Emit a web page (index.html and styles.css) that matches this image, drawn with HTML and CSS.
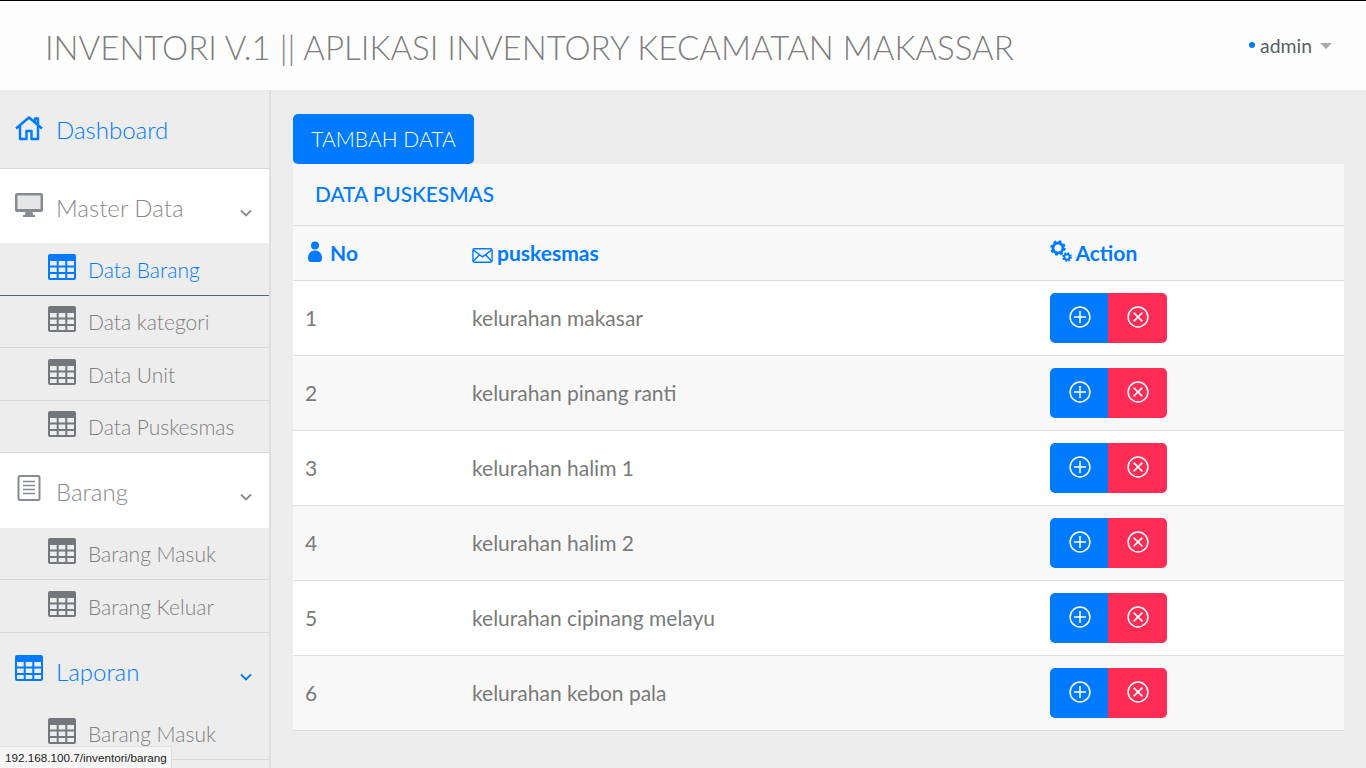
FILE: index.html
```html
<!DOCTYPE html>
<html>
<head>
    <title>Inventori</title>
    <meta charset="UTF-8">
    <meta name="viewport" content="width=device-width, initial-scale=1.0">
    <link rel="stylesheet" href="styles.css">
</head>
<body>
    <svg class="icon-defs" width="0" height="0">
        <defs>
            <symbol id="i-table" viewBox="0 0 28 26">
                <path fill-rule="evenodd" d="M2 0h24a2 2 0 0 1 2 2v22a2 2 0 0 1-2 2H2a2 2 0 0 1-2-2V2a2 2 0 0 1 2-2zM2 7v4.500h6.700V7zm8.700 0v4.500h6.600V7zm8.600 0v4.500H26V7zM2 13.500V18h6.700v-4.500zm8.700 0V18h6.600v-4.500zm8.600 0V18H26v-4.500zM2 20v4h6.700v-4zm8.700 0v4h6.600v-4zm8.600 0v4H26v-4z"/>
            </symbol>
            <symbol id="i-chevron" viewBox="0 0 12 8">
                <path d="M1 1.500l5 5 5-5" fill="none" stroke="currentColor" stroke-width="1.800"/>
            </symbol>
        </defs>
    </svg>

    <header class="topbar">
        <div class="brand">INVENTORI V.1 || APLIKASI INVENTORY KECAMATAN MAKASSAR</div>
        <div class="user-menu">
            <span class="user-dot"></span>
            <span class="user-name">admin</span>
            <span class="user-caret"></span>
        </div>
    </header>

    <div class="layout">
        <aside class="sidebar">
            <a class="nav-item nav-home is-blue">
                <svg class="nav-icon" viewBox="0 0 28 24" fill="none" stroke="currentColor" stroke-width="2.400" stroke-linejoin="round"><path d="M1 12.500L14 1.500l13 11M5 10v13h6.500v-8h5v8H23V10M20 6V2.500h3V9"/></svg>
                <span>Dashboard</span>
            </a>
            <a class="nav-item nav-master is-white">
                <svg class="nav-icon" viewBox="0 0 28 24" fill="currentColor"><rect x="2" y="2" width="24" height="15" fill="#e6e6e6"/><path fill-rule="evenodd" d="M2 0h24a2 2 0 0 1 2 2v15a2 2 0 0 1-2 2H2a2 2 0 0 1-2-2V2a2 2 0 0 1 2-2zm.5 2.500V16h23V2.500zM10.500 19h7l.5 3h2v2H8v-2h2z"/></svg>
                <span>Master Data</span>
                <svg class="nav-chevron"><use href="#i-chevron"/></svg>
            </a>
            <a class="sub-item is-tall is-current">
                <svg class="sub-icon"><use href="#i-table"/></svg>
                <span>Data Barang</span>
            </a>
            <a class="sub-item">
                <svg class="sub-icon"><use href="#i-table"/></svg>
                <span>Data kategori</span>
            </a>
            <a class="sub-item is-tall">
                <svg class="sub-icon"><use href="#i-table"/></svg>
                <span>Data Unit</span>
            </a>
            <a class="sub-item">
                <svg class="sub-icon"><use href="#i-table"/></svg>
                <span>Data Puskesmas</span>
            </a>
            <a class="nav-item is-white">
                <svg class="nav-icon" viewBox="0 0 28 26" fill="none" stroke="currentColor" stroke-width="2"><rect x="3.500" y="1" width="21" height="24" rx="1.500"/><path d="M8 6.500h12M8 10.500h12M8 14.500h12M8 18.500h12" stroke-width="1.600"/></svg>
                <span>Barang</span>
                <svg class="nav-chevron"><use href="#i-chevron"/></svg>
            </a>
            <a class="sub-item">
                <svg class="sub-icon"><use href="#i-table"/></svg>
                <span>Barang Masuk</span>
            </a>
            <a class="sub-item is-tall">
                <svg class="sub-icon"><use href="#i-table"/></svg>
                <span>Barang Keluar</span>
            </a>
            <a class="nav-item is-blue no-line">
                <svg class="nav-icon" fill="currentColor"><use href="#i-table"/></svg>
                <span>Laporan</span>
                <svg class="nav-chevron"><use href="#i-chevron"/></svg>
            </a>
            <a class="sub-item">
                <svg class="sub-icon"><use href="#i-table"/></svg>
                <span>Barang Masuk</span>
            </a>
        </aside>

        <main class="content">
            <button class="add-btn">TAMBAH DATA</button>
            <section class="card">
                <div class="card-title">DATA PUSKESMAS</div>
                <table class="data-table">
                    <thead>
                        <tr>
                            <th class="col-no">
                                <svg class="th-icon th-user" viewBox="0 0 14 22" fill="currentColor"><circle cx="7" cy="4.500" r="4"/><path d="M7 9.500c4 0 7 3 7 7.500 0 3-1.500 4-3 4H3c-1.500 0-3-1-3-4 0-4.500 3-7.500 7-7.500z"/></svg>
                                No
                            </th>
                            <th class="col-name">
                                <svg class="th-icon th-mail" viewBox="0 0 22 16" fill="none" stroke="currentColor" stroke-width="1.500"><rect x=".8" y=".8" width="20.400" height="14.400" rx="1.500"/><path d="M1 2l10 7.500L21 2M1 14.500l7-7.500M21 14.500l-7-7.500"/></svg>
                                puskesmas
                            </th>
                            <th>
                                <svg class="th-icon th-cogs" viewBox="0 0 22 22"><circle cx="8" cy="8" r="5" fill="none" stroke="currentColor" stroke-width="3"/><circle cx="8" cy="8" r="6.500" fill="none" stroke="currentColor" stroke-width="2.500" stroke-dasharray="2.600 2.500"/><circle cx="17" cy="17" r="2.700" fill="none" stroke="currentColor" stroke-width="2"/><circle cx="17" cy="17" r="4" fill="none" stroke="currentColor" stroke-width="1.800" stroke-dasharray="1.700 1.450"/></svg>
                                Action
                            </th>
                        </tr>
                    </thead>
                    <tbody id="rows"></tbody>
                </table>
            </section>
        </main>
    </div>

    <div class="status-link">192.168.100.7/inventori/barang</div>

    <script>
        const names = [
            'kelurahan makasar',
            'kelurahan pinang ranti',
            'kelurahan halim 1',
            'kelurahan halim 2',
            'kelurahan cipinang melayu',
            'kelurahan kebon pala'
        ];
        const tbody = document.getElementById('rows');
        names.forEach(function(name, i) {
            const row = document.createElement('tr');
            row.innerHTML = `
                <td>${i + 1}</td>
                <td>${name}</td>
                <td class="cell-actions">
                    <div class="btn-group">
                        <button class="act-btn act-add"><svg viewBox="0 0 20 20" fill="none" stroke="currentColor" stroke-width="1.400"><circle cx="10" cy="10" r="9"/><path d="M10 4.500v11M4.500 10h11"/></svg></button>
                        <button class="act-btn act-del"><svg viewBox="0 0 20 20" fill="none" stroke="currentColor" stroke-width="1.400"><circle cx="10" cy="10" r="9"/><path d="M6 6l8 8M14 6l-8 8"/></svg></button>
                    </div>
                </td>
            `;
            tbody.appendChild(row);
        });
    </script>
</body>
</html>
```

FILE: styles.css
```css
html, body {
    height: 100%;
    margin: 0;
    overflow: hidden;
}
body {
    font-family: 'Lato', sans-serif;
    background-color: #ededed;
    color: #7a7a7a;
}
.icon-defs {
    position: absolute;
}

/* top bar */
.topbar {
    height: 90px;
    box-sizing: border-box;
    border-top: 1px solid #000;
    background-color: #fdfdfd;
    display: flex;
    justify-content: space-between;
    align-items: center;
    padding: 2px 34px 0 45px;
}
.brand {
    font-size: 33.060px;
    font-weight: 300;
    color: #7d7d7d;
    white-space: nowrap;
}
.user-menu {
    display: flex;
    align-items: center;
    margin-bottom: 3px;
}
.user-dot {
    width: 6px;
    height: 6px;
    border-radius: 50%;
    background-color: #007bff;
    margin-right: 5px;
}
.user-name {
    font-size: 19.400px;
    color: #5a5f66;
}
.user-caret {
    width: 0;
    height: 0;
    margin-left: 8px;
    margin-top: 2px;
    border-left: 6px solid transparent;
    border-right: 6px solid transparent;
    border-top: 6px solid #a9aab0;
}

/* layout */
.layout {
    display: flex;
    height: 678px;
}
.sidebar {
    width: 269px;
    flex-shrink: 0;
    overflow: hidden;
    padding-top: 1px;
    border-right: 2px solid #dedede;
}

/* sidebar */
.nav-item {
    height: 75px;
    box-sizing: border-box;
    display: flex;
    align-items: center;
    position: relative;
    padding-left: 15px;
    font-size: 24px;
    font-weight: 300;
    border-bottom: 1px solid #d8d8d8;
}
.nav-home {
    height: 78px;
}
.nav-master {
    height: 74px;
    padding-top: 2px;
}
.nav-item.is-white {
    background-color: #fff;
    color: #8a8a8a;
    border-bottom: none;
}
.nav-item.is-blue {
    color: #007bff;
}
.nav-item.no-line {
    border-bottom: none;
}
.nav-icon {
    width: 28px;
    height: 26px;
    margin-right: 13px;
    margin-top: -5px;
}
.nav-home .nav-icon {
    margin-top: -3px;
}
.nav-item.is-white .nav-icon {
    color: #858b91;
}
.nav-item span {
    margin-top: 1px;
}
.nav-item.nav-home span {
    margin-top: -1px;
}
.nav-chevron {
    position: absolute;
    right: 17px;
    top: 40px;
    width: 12px;
    height: 8px;
}
.sub-item {
    height: 52px;
    box-sizing: border-box;
    display: flex;
    align-items: center;
    padding-left: 48px;
    font-size: 21px;
    font-weight: 300;
    color: #7f7f7f;
    border-bottom: 1px solid #d8d8d8;
}
.sub-item.is-tall {
    height: 53px;
}
.sub-item.is-current {
    color: #007bff;
    border-bottom-color: #5a6570;
}
.sub-icon {
    width: 28px;
    height: 26px;
    margin-right: 12px;
    margin-top: -5px;
    fill: #73777c;
}
.is-current .sub-icon {
    fill: #007bff;
}

/* content */
.content {
    flex: 1;
    padding: 24px 22px 0 22px;
}
.add-btn {
    display: block;
    height: 50px;
    width: 181px;
    padding: 0 0 2px 0;
    border: none;
    border-radius: 5px;
    background-color: #007bff;
    color: #fff;
    font-family: inherit;
    font-size: 21px;
    font-weight: 300;
}
.card {
    background-color: #fff;
    border-bottom: 1px solid #dcdcdc;
}
.card-title {
    height: 61px;
    line-height: 59px;
    padding-left: 22px;
    font-size: 20.800px;
    font-weight: 500;
    color: #007bff;
    background-color: #f7f7f7;
    border-bottom: 1px solid #dedede;
}
.data-table {
    width: 100%;
    border-collapse: collapse;
    table-layout: fixed;
}
.data-table th {
    height: 52px;
    padding: 0 0 2px 12px;
    text-align: left;
    font-size: 21px;
    font-weight: 700;
    color: #007bff;
    background-color: #f9f9f9;
    border-bottom: 1px solid #dedede;
}
.col-no {
    width: 155px;
}
.col-name {
    width: 566px;
}
.th-icon {
    vertical-align: -2px;
}
.th-user {
    width: 14px;
    height: 22px;
    margin-left: 3px;
    margin-right: 3px;
}
.th-mail {
    width: 21px;
    height: 15px;
    margin-right: -1px;
    vertical-align: -2px;
}
.th-cogs {
    width: 22px;
    height: 22px;
    margin-right: -1px;
    vertical-align: -1px;
}
.data-table td {
    height: 72px;
    padding: 0 0 2px 12px;
    font-size: 21px;
    color: #7a7a7a;
    border-bottom: 1px solid #e0e0e0;
}
.data-table td.cell-actions {
    height: 74px;
    padding-bottom: 0;
}
.data-table tbody tr:nth-child(even) {
    background-color: #f8f8f8;
}
.data-table tbody tr:last-child td {
    border-bottom: none;
}
.btn-group {
    display: flex;
    width: 117px;
}
.act-btn {
    height: 50px;
    padding: 0;
    border: none;
    color: #fff;
    display: flex;
    align-items: center;
    justify-content: center;
}
.act-btn svg {
    width: 22px;
    height: 22px;
    margin-top: -2px;
}
.act-add {
    width: 58px;
    padding-left: 2px;
    background-color: #007bff;
    border-radius: 5px 0 0 5px;
}
.act-del {
    width: 59px;
    background-color: #ff2d55;
    border-radius: 0 5px 5px 0;
}

/* link preview of the browser */
.status-link {
    position: fixed;
    left: 0;
    bottom: 0;
    height: 21px;
    line-height: 21px;
    padding: 0 4px 0 5px;
    font-family: 'Liberation Sans', sans-serif;
    font-size: 11.700px;
    color: #222;
    background-color: #f5f5f5;
    border-top: 1px solid #e0e0e0;
    border-right: 1px solid #e0e0e0;
}
```
